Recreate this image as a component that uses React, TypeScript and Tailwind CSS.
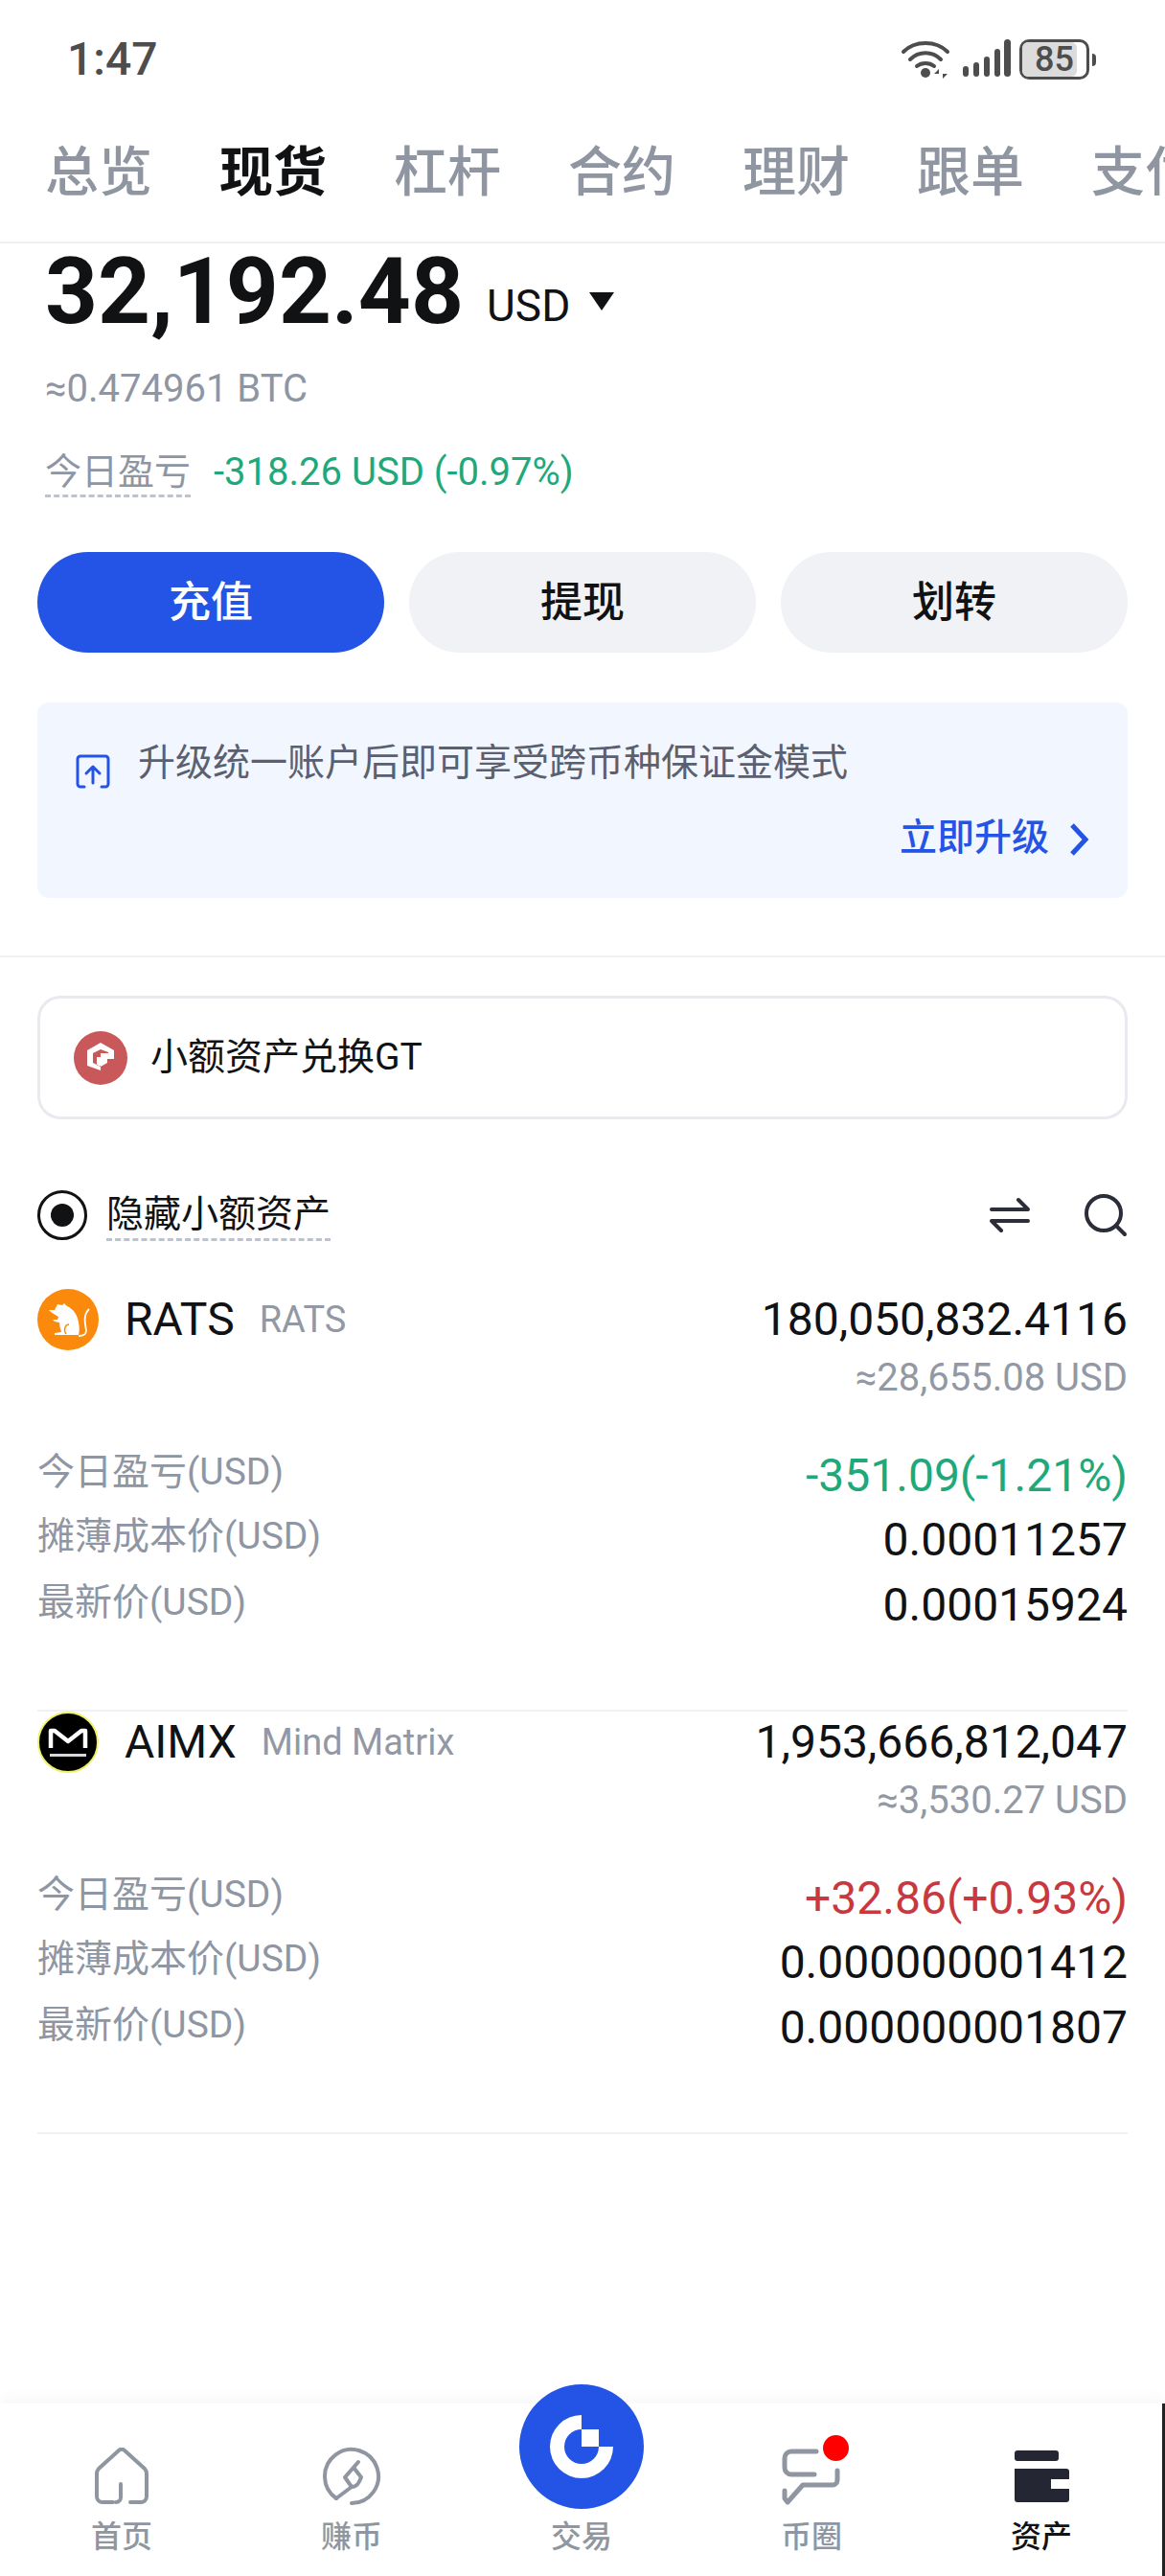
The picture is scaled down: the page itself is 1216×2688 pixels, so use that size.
import React from 'react';

const FONT = 'font-["Roboto","Noto_Sans_CJK_SC",sans-serif]';

const tabs = ['总览', '现货', '杠杆', '合约', '理财', '跟单', '支付'];

const holdings = [
  {
    symbol: 'RATS',
    name: 'RATS',
    amount: '180,050,832.4116',
    usd: '≈28,655.08 USD',
    pnl: '-351.09(-1.21%)',
    pnlColor: 'text-[#1fa97b]',
    cost: '0.00011257',
    last: '0.00015924',
    icon: <RatIcon />,
  },
  {
    symbol: 'AIMX',
    name: 'Mind Matrix',
    amount: '1,953,666,812,047',
    usd: '≈3,530.27 USD',
    pnl: '+32.86(+0.93%)',
    pnlColor: 'text-[#c8393f]',
    cost: '0.000000001412',
    last: '0.000000001807',
    icon: <MatrixIcon />,
  },
];

function RatIcon() {
  return (
    <svg width="64" height="64" viewBox="0 0 64 64">
      <circle cx="32" cy="32" r="32" fill="#fb8a0c" />
      <path
        d="M12 22l6 0 3-6 5 1 2-2 3 3c7 3 11 10 12 17 1 5 1 9 0 13H23l-5 0 0-2 7-1c-1-3-2-7-2-10l-5-1-2-2 5 0 1-3-5-3-3-2z"
        fill="#fff"
      />
      <path d="M43 49c5 0 8-1 8-6-1-6-3-12 0-18 1-2 2-3 3-4" fill="none" stroke="#fff" strokeWidth="1.8" />
      <path d="M30 47c-3-4-1-10 3-10" fill="none" stroke="#fb8a0c" strokeWidth="1.4" />
    </svg>
  );
}

function MatrixIcon() {
  return (
    <svg width="64" height="64" viewBox="0 0 64 64">
      <circle cx="32" cy="32" r="31" fill="#000" stroke="#eef06a" strokeWidth="2" />
      <path d="M14 38V20h4l14 11 14-11h4v18" fill="none" stroke="#fff" strokeWidth="4.5" strokeLinejoin="round" />
      <rect x="13" y="44" width="38" height="3" fill="#d8d8d8" />
    </svg>
  );
}

function GateSmall() {
  return (
    <svg width="56" height="56" viewBox="0 0 56 56">
      <circle cx="28" cy="28" r="28" fill="#c9585b" />
      <path
        d="M28 12l14 8v9H28v-2h-4v9h4v5l-14-5V20z M28 19l-8 4v10l8 4 7-4v-4h-7v-6h8v-1z"
        fill="#fff"
        fillRule="evenodd"
      />
    </svg>
  );
}

function GateLogo() {
  return (
    <svg width="66" height="66" viewBox="0 0 66 66">
      <path d="M33 0A33 33 0 1 0 66 33H51A18 18 0 1 1 33 15Z" fill="#fff" />
      <rect x="33" y="15" width="18" height="18" fill="#fff" />
    </svg>
  );
}

function StatusIcons() {
  return (
    <div className="flex items-center">
      <svg width="54" height="42" viewBox="0 0 54 42" fill="none" stroke="#4d4d4d" strokeLinecap="round">
        <path d="M3 13C15 1 37 1 49 13" strokeWidth="4" />
        <path d="M10 21C19 12 33 12 42 21" strokeWidth="4" />
        <path d="M17 28C22 24 30 24 35 28" strokeWidth="4" />
        <circle cx="26" cy="35" r="5" fill="#4d4d4d" stroke="none" />
        <path d="M40 31l-5 5h5zM44 41l5-5h-5z" fill="#4d4d4d" stroke="none" />
      </svg>
      <svg className="ml-[11px]" width="50" height="42" viewBox="0 0 50 42" fill="#4d4d4d">
        <rect x="0" y="28" width="6" height="11" rx="3" />
        <rect x="11" y="24" width="6" height="15" rx="3" />
        <rect x="22" y="18" width="6" height="21" rx="3" />
        <rect x="33" y="10" width="6" height="29" rx="3" />
        <rect x="43" y="0" width="7" height="39" rx="3.5" />
      </svg>
      <div className="ml-[9px] relative flex h-[42px] w-[73px] items-center justify-center rounded-[10px] border-[3px] border-[#4d4d4d] bg-white text-[36px] font-medium text-[#4d4d4d]">
        <div className="absolute inset-y-0 left-0 w-[85%] rounded-[6px] bg-[#dcdcdc]" />
        <span className="relative leading-none">85</span>
      </div>
      <div className="ml-[3px] h-[13px] w-[4px] rounded-r-full bg-[#4d4d4d]" />
    </div>
  );
}

function NavItem({ label, active, children }: { label: string; active?: boolean; children?: React.ReactNode }) {
  return (
    <div className="flex w-[240px] flex-col items-center">
      <div className="flex h-[62px] w-full items-center justify-center">{children}</div>
      <div className={`mt-[12px] text-[32px] leading-[40px] font-medium ${active ? 'text-[#111214]' : 'text-[#8f96a1]'}`}>{label}</div>
    </div>
  );
}

function Holding({ h }: { h: (typeof holdings)[number] }) {
  return (
    <div className="mx-[39px] h-[441px] border-b-2 border-[#f0f1f4]">
      <div className="flex justify-between">
        <div className="flex h-[64px] items-center">
          {h.icon}
          <span className="ml-[27px] text-[48px] leading-none text-[#111214]">{h.symbol}</span>
          <span className="ml-[26px] text-[38px] leading-none text-[#9399a4]">{h.name}</span>
        </div>
        <div className="text-right">
          <div className="text-[48px] leading-[64px] text-[#111214]">{h.amount}</div>
          <div className="text-[40px] leading-[58px] text-[#9399a4]">{h.usd}</div>
        </div>
      </div>
      <div className="mt-[36px] flex justify-between">
        <div className="text-[39px] text-[#8f96a3]">
          <div className="leading-[66px]">今日盈亏(USD)</div>
          <div className="leading-[68px]">摊薄成本价(USD)</div>
          <div className="leading-[70px]">最新价(USD)</div>
        </div>
        <div className="pt-[4px] text-right text-[48px] text-[#111214]">
          <div className={`leading-[66px] ${h.pnlColor}`}>{h.pnl}</div>
          <div className="leading-[67px]">{h.cost}</div>
          <div className="leading-[69px]">{h.last}</div>
        </div>
      </div>
    </div>
  );
}

export default function App() {
  return (
    <div className={`${FONT} relative flex h-[2688px] w-[1216px] flex-col overflow-hidden bg-white`}>
      {/* status bar */}
      <div className="flex h-[124px] shrink-0 items-center justify-between pl-[70px] pr-[72px]">
        <span className="text-[48px] font-medium text-[#4d4d4d]">1:47</span>
        <StatusIcons />
      </div>

      {/* tabs */}
      <div className="flex h-[130px] shrink-0 gap-[70px] overflow-hidden border-b-2 border-[#eff0f2] pl-[47px]">
        {tabs.map((t, i) => (
          <div
            key={t}
            className={`h-[112px] shrink-0 text-[56px] leading-[112px] ${i === 1 ? 'font-bold text-[#111214]' : 'font-medium text-[#8f96a1]'}`}
          >
            {t}
          </div>
        ))}
      </div>

      <main className="flex-1">
        {/* balance */}
        <div className="pl-[47px]">
          <div className="flex h-[100px] items-center">
            <span className="text-[96px] leading-none font-bold text-[#111214]">32,192.48</span>
            <span className="ml-[24px] mt-[30px] text-[46px] leading-none text-[#111214]">USD</span>
            <span className="ml-[20px] mt-[20px] h-0 w-0 border-x-[13px] border-t-[19px] border-x-transparent border-t-[#111214]" />
          </div>
          <div className="mt-[22px] text-[40px] leading-[60px] text-[#8f96a3]">≈0.474961 BTC</div>
          <div className="mt-[30px] flex h-[54px] items-center text-[40px]">
            <span className="border-b-[3px] border-dashed border-[#bdc2cb] text-[38px] leading-[48px] text-[#8f96a3]">今日盈亏</span>
            <span className="ml-[24px] text-[#1fa97b]">-318.26 USD (-0.97%)</span>
          </div>
        </div>

        {/* actions */}
        <div className="mt-[56px] flex gap-[26px] px-[39px]">
          <div className="flex h-[105px] flex-1 items-center justify-center rounded-full bg-[#2354e6] text-[44px] font-medium text-white">充值</div>
          <div className="flex h-[105px] flex-1 items-center justify-center rounded-full bg-[#f1f2f6] text-[44px] font-medium text-[#111214]">提现</div>
          <div className="flex h-[105px] flex-1 items-center justify-center rounded-full bg-[#f1f2f6] text-[44px] font-medium text-[#111214]">划转</div>
        </div>

        {/* upgrade banner */}
        <div className="mx-[39px] mt-[52px] h-[204px] rounded-[12px] bg-[#f2f6fe] pl-[40px] pr-[38px] pt-[36px]">
          <div className="flex items-start">
            <svg className="mt-[18px]" width="36" height="36" viewBox="0 0 36 36" fill="none" stroke="#2354e6" strokeWidth="3" strokeLinecap="round" strokeLinejoin="round">
              <path d="M9 34H5a3 3 0 0 1-3-3V5a3 3 0 0 1 3-3h26a3 3 0 0 1 3 3v26a3 3 0 0 1-3 3h-4" />
              <path d="M18 30V14M11 20l7-7 7 7" />
            </svg>
            <span className="ml-[29px] text-[39px] leading-[54px] text-[#5b6070]">升级统一账户后即可享受跨币种保证金模式</span>
          </div>
          <div className="mt-[24px] flex items-center justify-end">
            <span className="text-[39px] leading-[54px] font-medium text-[#2354e6]">立即升级</span>
            <svg className="ml-[20px] mt-[4px]" width="24" height="36" viewBox="0 0 24 36" fill="none" stroke="#2354e6" strokeWidth="5">
              <path d="M4 3l14 15L4 33" />
            </svg>
          </div>
        </div>

        <div className="mt-[60px] h-[2px] bg-[#f0f1f4]" />

        {/* small asset convert */}
        <div className="mx-[39px] mt-[40px] flex h-[129px] items-center rounded-[24px] border-[3px] border-[#e9eaef] pl-[35px]">
          <GateSmall />
          <span className="ml-[24px] text-[39px] text-[#111214]">小额资产兑换GT</span>
        </div>

        {/* filter row */}
        <div className="mx-[39px] mt-[72px] flex h-[56px] items-center justify-between">
          <div className="flex items-center">
            <span className="flex h-[52px] w-[52px] items-center justify-center rounded-full border-[3px] border-[#111214]">
              <span className="h-[24px] w-[24px] rounded-full bg-[#111214]" />
            </span>
            <span className="ml-[20px] border-b-[3px] border-dashed border-[#bdc2cb] text-[39px] leading-[50px] text-[#111214]">隐藏小额资产</span>
          </div>
          <div className="flex items-center">
            <svg width="44" height="38" viewBox="0 0 44 38" fill="none" stroke="#2b2e38" strokeWidth="4" strokeLinecap="round" strokeLinejoin="round">
              <path d="M3 13h38L31 3M41 25H3l10 10" />
            </svg>
            <svg className="ml-[55px]" width="46" height="46" viewBox="0 0 46 46" fill="none" stroke="#2b2e38" strokeWidth="4" strokeLinecap="round">
              <circle cx="21" cy="21" r="18" />
              <path d="M34 34l9 9" />
            </svg>
          </div>
        </div>

        <div className="mt-[49px]">
          {holdings.map(h => (
            <Holding key={h.symbol} h={h} />
          ))}
        </div>
      </main>

      {/* bottom nav */}
      <div className="relative h-[180px] shrink-0 border-r-[3px] border-[#222] shadow-[0_-6px_12px_rgba(60,70,100,0.04)]">
        <div className="absolute left-[542px] top-[-20px] flex h-[130px] w-[130px] items-center justify-center rounded-full bg-[#2354e6]">
          <GateLogo />
        </div>
        <div className="flex pl-[7px] pt-[45px]">
          <NavItem label="首页">
            <svg width="58" height="60" viewBox="0 0 58 60" fill="none" stroke="#8f96a1" strokeWidth="4" strokeLinecap="round" strokeLinejoin="round">
              <path d="M20 57H9a6 6 0 0 1-6-6V27a8 8 0 0 1 2-5L26 3a4 4 0 0 1 6 0l21 19a8 8 0 0 1 2 5v24a6 6 0 0 1-6 6H38" />
              <path d="M28 38v14a5 5 0 0 1-5 5" />
            </svg>
          </NavItem>
          <NavItem label="赚币">
            <svg width="62" height="62" viewBox="0 0 62 62" fill="none" stroke="#8f96a1" strokeWidth="4" strokeLinecap="round" strokeLinejoin="round">
              <path d="M31 59A28 28 0 1 0 15 54" />
              <path d="M38 16L24 32l7 10-16 12" />
              <path d="M31 42c6 0 8-5 10-10l-7-9" />
            </svg>
          </NavItem>
          <NavItem label="交易" />
          <NavItem label="币圈">
            <div className="relative h-[62px] w-[62px]">
              <svg width="62" height="62" viewBox="0 0 62 62" fill="none" stroke="#8f96a1" strokeWidth="5" strokeLinecap="round" strokeLinejoin="round">
                <path d="M36 5H10a7 7 0 0 0-7 7v10a7 7 0 0 0 7 7h24" />
                <path d="M58 25v10a5 5 0 0 1-5 5H22L6 58l-3-4V46" />
              </svg>
              <span className="absolute right-[-8px] top-[-12px] h-[27px] w-[27px] rounded-full bg-[#f00]" />
            </div>
          </NavItem>
          <NavItem label="资产" active>
            <svg width="60" height="54" viewBox="0 0 60 54" fill="#242733">
              <rect x="2" y="0" width="46" height="11" rx="3" />
              <path d="M2 19h54a3 3 0 0 1 3 3v8H40v10h19v11a3 3 0 0 1-3 3H5a3 3 0 0 1-3-3z" />
            </svg>
          </NavItem>
        </div>
      </div>
    </div>
  );
}
